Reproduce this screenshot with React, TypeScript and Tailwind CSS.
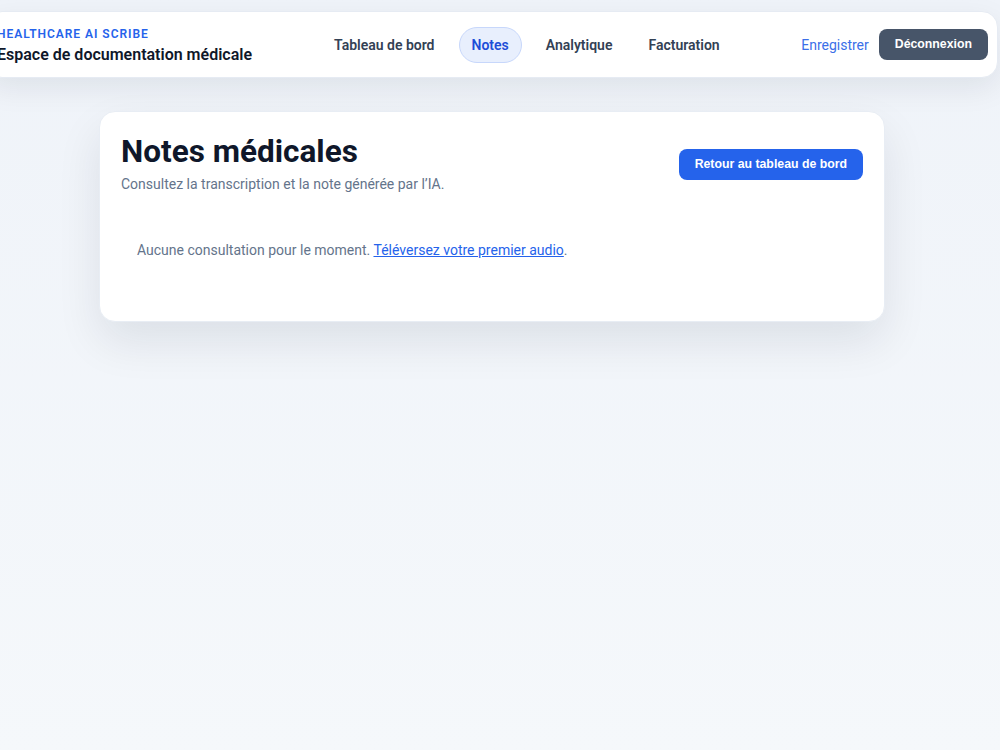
import React from "react";

const navItems = ["Tableau de bord", "Notes", "Analytique", "Facturation"];

export default function App() {
  return (
    <div
      className="min-h-[750px] w-full overflow-hidden bg-gradient-to-b from-[#eff3f9] to-[#f5f8fb] pb-10"
      style={{ fontFamily: "Roboto, 'Noto Sans', sans-serif" }}
    >
      {/* Top bar */}
      <header className="ml-[-14px] mt-[11px] flex h-[67px] w-[1012px] items-center rounded-2xl border border-[#e6ebf3] bg-white pl-[10px] pr-[9px] shadow-[0_10px_30px_rgba(15,23,42,0.08)]">
        <div className="flex flex-col pt-[2px]">
          <span className="text-[12px] font-semibold uppercase leading-[16px] tracking-[0.08em] text-[#2563eb]">
            Healthcare AI Scribe
          </span>
          <span className="mt-[2px] text-[16px] font-semibold leading-[22px] text-[#0f172a]">
            Espace de documentation médicale
          </span>
        </div>

        <nav className="ml-[70px] flex items-center gap-3">
          {navItems.map((item) =>
            item === "Notes" ? (
              <a
                key={item}
                className="rounded-full border border-[#c7d7fb] bg-[#e8effd] px-[12px] py-[6px] text-[14px] font-semibold leading-[22px] text-[#1d4ed8]"
              >
                {item}
              </a>
            ) : (
              <a
                key={item}
                className="rounded-full border border-transparent px-[11px] py-[6px] text-[14px] font-semibold leading-[22px] text-[#334155]"
              >
                {item}
              </a>
            )
          )}
        </nav>

        <div className="ml-auto flex items-center gap-[10px]">
          <a className="text-[14px] leading-[22px] text-[#3b6fe8]">Enregistrer</a>
          <button
            className="h-[31px] rounded-[8px] bg-[#475569] px-[16px] text-[12.3px] font-bold text-white"
            style={{ fontFamily: "'Liberation Sans', Arial, sans-serif" }}
          >
            Déconnexion
          </button>
        </div>
      </header>

      {/* Notes card */}
      <main className="ml-[99px] mt-[33px] w-[786px] rounded-2xl border border-[#e8edf4] bg-white px-[21px] pb-[60px] pt-[21px] shadow-[0_20px_45px_rgba(15,23,42,0.09)]">
        <div className="flex items-center justify-between">
          <div className="flex flex-col">
            <h1 className="text-[31.5px] font-bold leading-[38px] text-[#0f172a]">Notes médicales</h1>
            <p className="mt-[3px] text-[14px] leading-[21px] text-[#64748b]">
              Consultez la transcription et la note générée par l’IA.
            </p>
          </div>
          <button
            className="h-[31px] rounded-[8px] bg-[#2563eb] px-[16px] text-[12.3px] font-bold text-white"
            style={{ fontFamily: "'Liberation Sans', Arial, sans-serif" }}
          >
            Retour au tableau de bord
          </button>
        </div>

        <p className="mt-[44px] px-4 text-[14px] leading-[22px] text-[#64748b]">
          Aucune consultation pour le moment.{" "}
          <a className="text-[#2563eb] underline">Téléversez votre premier audio</a>.
        </p>
      </main>
    </div>
  );
}
